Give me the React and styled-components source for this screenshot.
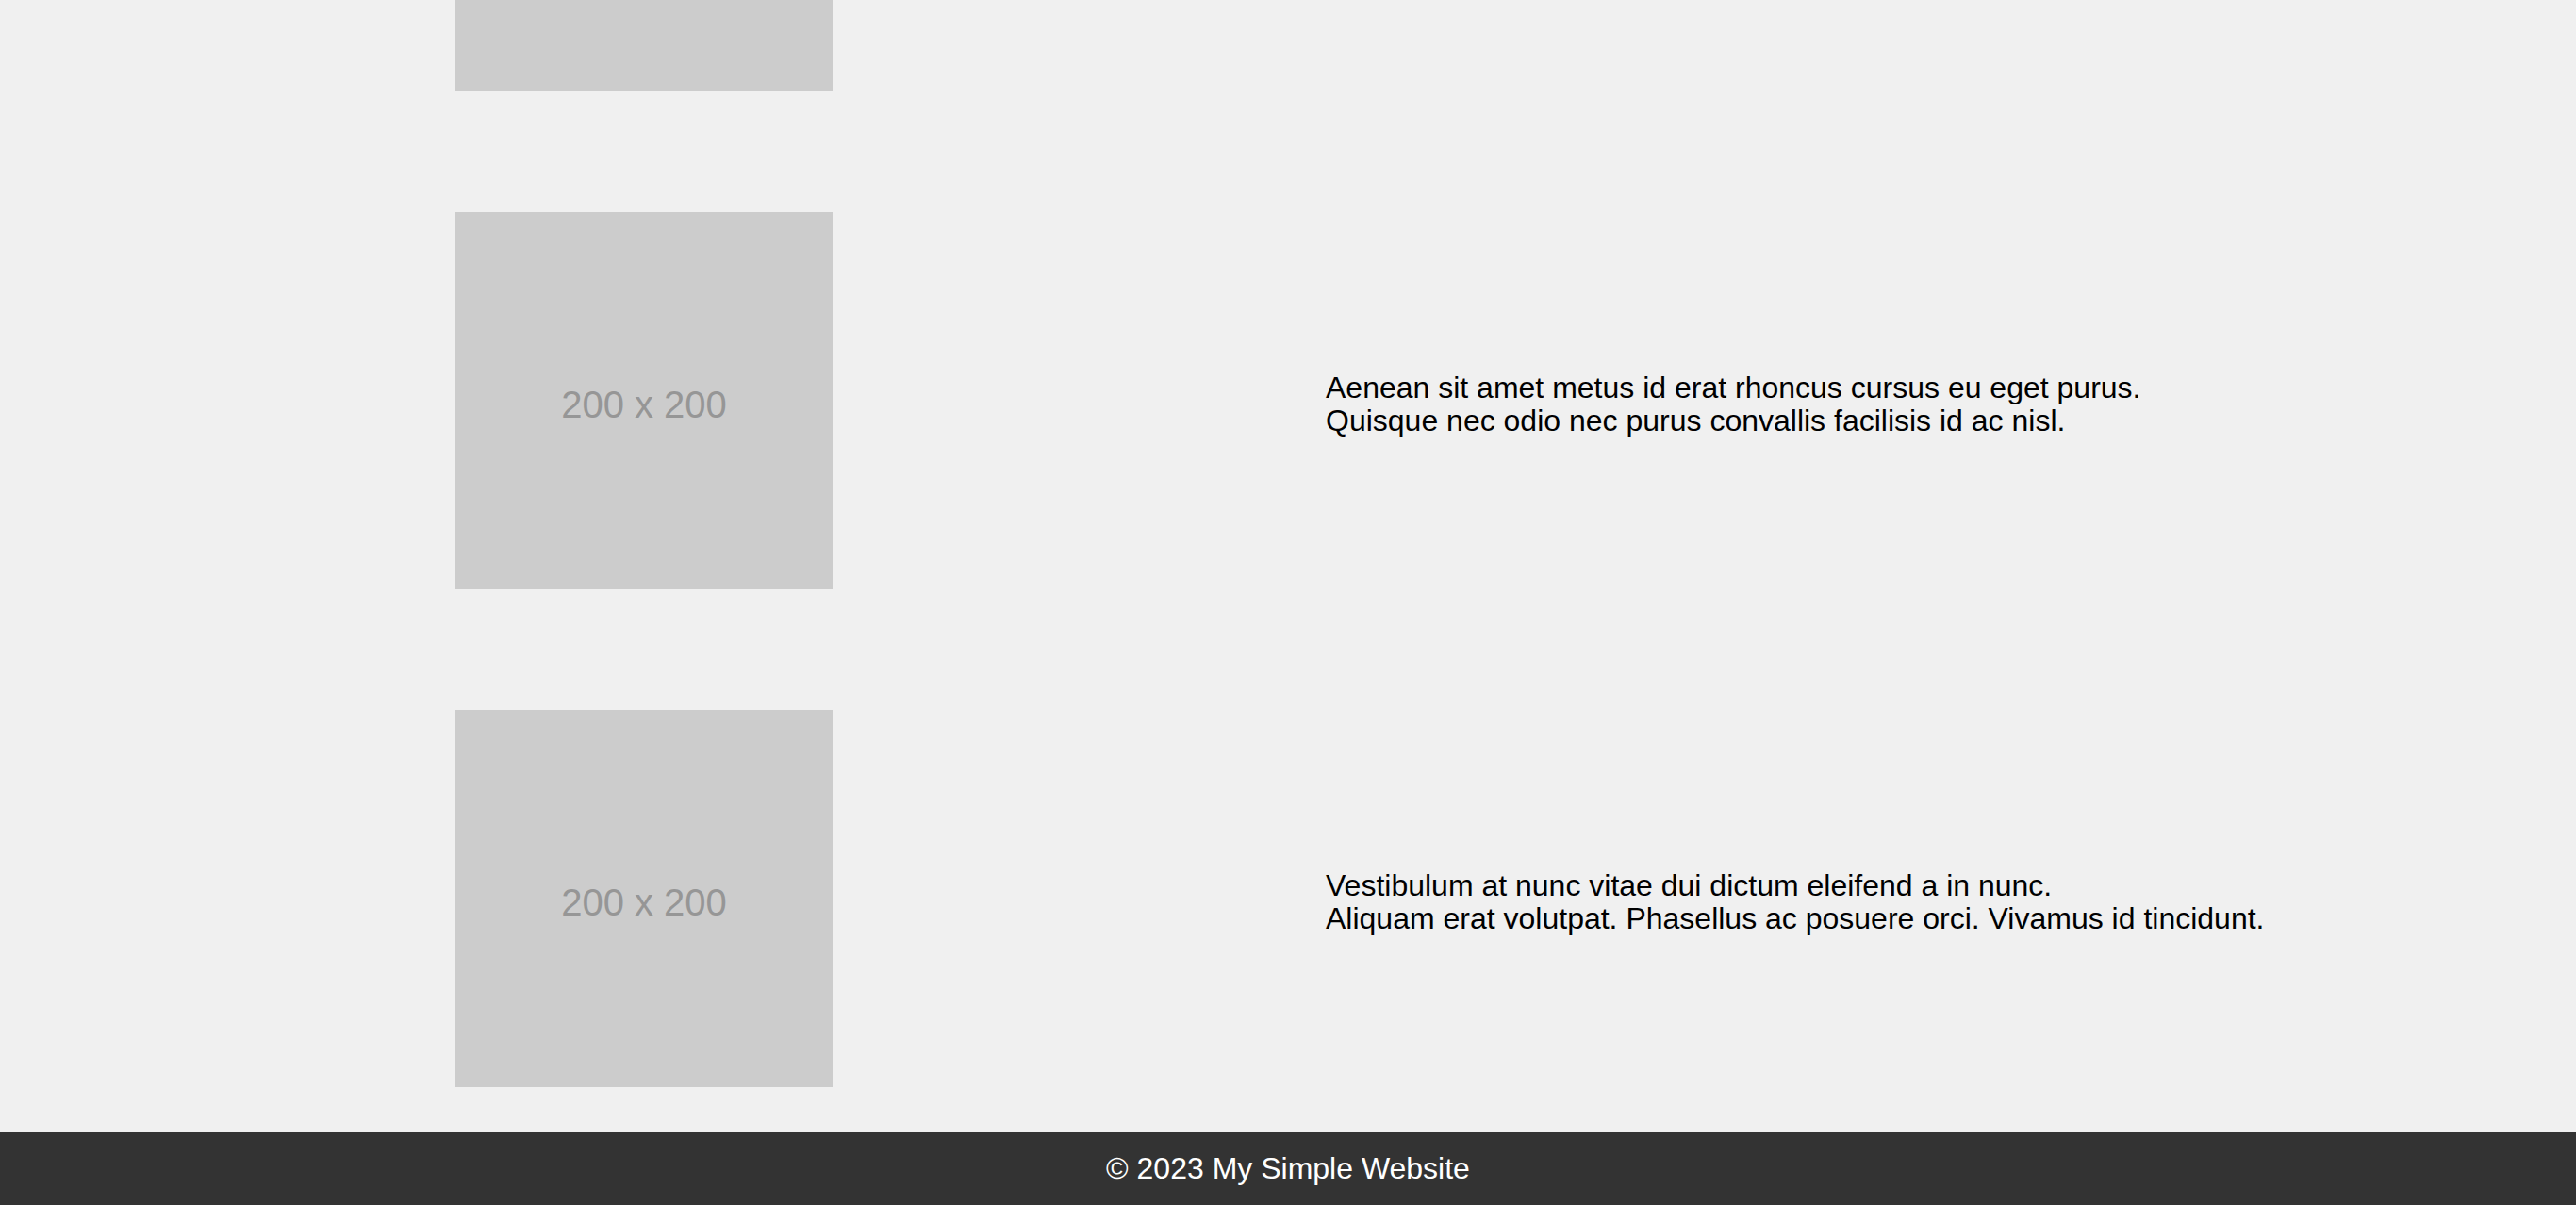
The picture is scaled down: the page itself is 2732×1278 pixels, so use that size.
import React from "react";
import styled, { createGlobalStyle } from "styled-components";

const GlobalStyle = createGlobalStyle`
  html, body {
    margin: 0;
    padding: 0;
    height: 100%;
  }
  body {
    background: #f0f0f0;
    font-family: "Liberation Sans", Arial, sans-serif;
    color: #000;
  }
  #root {
    height: 100%;
  }
`;

const Page = styled.div`
  height: 100vh;
  display: flex;
  flex-direction: column;
`;

const Main = styled.main`
  flex: 1;
  min-height: 0;
  overflow: hidden;
  display: flex;
  flex-direction: column;
  justify-content: flex-end;
  gap: 128px;
  padding-bottom: 48px;
`;

const Section = styled.section`
  flex-shrink: 0;
  display: flex;
  align-items: center;
`;

const Half = styled.div`
  box-sizing: border-box;
  width: 50%;
  display: flex;
  justify-content: ${props => (props.$center ? "center" : "flex-start")};
  padding: ${props => (props.$center ? "0" : "0 40px")};
`;

const Placeholder = styled.div`
  box-sizing: border-box;
  width: 400px;
  height: 400px;
  padding-top: 8px;
  background: #cccccc;
  color: #969696;
  font-size: 40px;
  display: flex;
  align-items: center;
  justify-content: center;
`;

const Copy = styled.p`
  margin: 0;
  padding-top: 7px;
  font-size: 32px;
  line-height: 35px;
`;

const Footer = styled.footer`
  flex-shrink: 0;
  background: #333333;
  color: #ffffff;
  text-align: center;
  font-size: 32px;
  line-height: 37px;
  padding: 20px 0;
`;

const sections = [
  {
    id: 1,
    lines: [
      "Lorem ipsum dolor sit amet, consectetur adipiscing elit.",
      "Integer nec odio. Praesent libero. Sed cursus ante dapibus diam."
    ]
  },
  {
    id: 2,
    lines: [
      "Aenean sit amet metus id erat rhoncus cursus eu eget purus.",
      "Quisque nec odio nec purus convallis facilisis id ac nisl."
    ]
  },
  {
    id: 3,
    lines: [
      "Vestibulum at nunc vitae dui dictum eleifend a in nunc.",
      "Aliquam erat volutpat. Phasellus ac posuere orci. Vivamus id tincidunt."
    ]
  }
];

const App = () => {
  return (
    <Page>
      <GlobalStyle />
      <Main>
        {sections.map(section => (
          <Section key={section.id}>
            <Half $center>
              <Placeholder>200 x 200</Placeholder>
            </Half>
            <Half>
              <Copy>
                {section.lines[0]}
                <br />
                {section.lines[1]}
              </Copy>
            </Half>
          </Section>
        ))}
      </Main>
      <Footer>© 2023 My Simple Website</Footer>
    </Page>
  );
};

export default App;
